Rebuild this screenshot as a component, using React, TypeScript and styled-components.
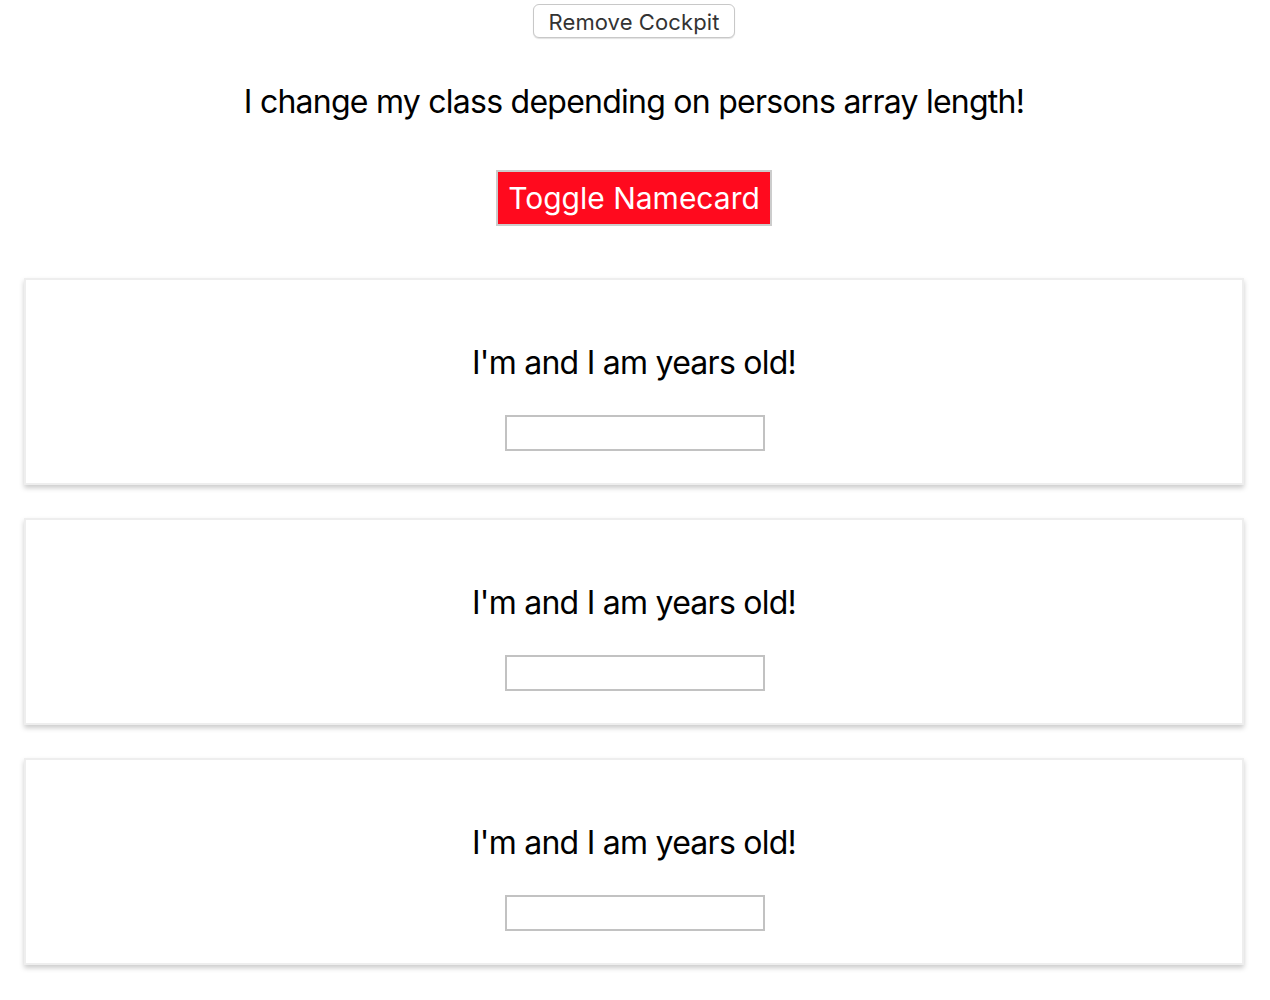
import React from "react";
import styled, { createGlobalStyle } from "styled-components";

const GlobalStyle = createGlobalStyle`
  html, body {
    margin: 0;
    padding: 0;
    background: #ffffff;
    font-family: Inter, "Noto Sans", "Liberation Sans", sans-serif;
  }
  * { box-sizing: border-box; }
`;

const Page = styled.div`
  display: flex;
  flex-direction: column;
  align-items: center;
  padding: 4px 2px 34px 0;
  text-align: center;
`;

const RemoveButton = styled.button`
  height: 34px;
  padding: 2px 15px 0;
  background: #ffffff;
  border: 1px solid #c8c8c8;
  border-radius: 6px;
  box-shadow: 0 1px 1px rgba(0, 0, 0, 0.12);
  color: #333333;
  font-family: inherit;
  font-size: 22px;
  line-height: 30px;
  letter-spacing: 0.1px;
  cursor: pointer;
`;

const Heading = styled.p`
  margin: 44px 0 0;
  font-size: 32px;
  line-height: 40px;
  letter-spacing: -0.75px;
  color: #000000;
`;

const ToggleButton = styled.button`
  margin-top: 48px;
  height: 56px;
  padding: 0 10px;
  background: #ff0a1e;
  border: 2px solid #cccccc;
  color: #ffffff;
  font-family: inherit;
  font-size: 30px;
  line-height: 50px;
  cursor: pointer;
`;

const CardList = styled.div`
  margin-top: 52px;
  display: flex;
  flex-direction: column;
  gap: 33px;
  align-items: center;
  width: 100%;
`;

const Card = styled.div`
  width: 1220px;
  padding: 63px 0 32px;
  border: 2px solid #eeeeee;
  box-shadow: 0 3px 5px #cccccc;
  background: #ffffff;
  display: flex;
  flex-direction: column;
  align-items: center;
`;

const CardText = styled.p`
  margin: 0 0 32px;
  font-size: 32px;
  line-height: 40px;
  letter-spacing: -0.75px;
  color: #000000;
`;

const NameInput = styled.input`
  width: 260px;
  height: 36px;
  margin-left: 2px;
  border: 2px solid #c2c2c2;
  background: #ffffff;
  font-family: inherit;
  font-size: 20px;
  padding: 0 6px;
  outline: none;
`;

const persons = [0, 1, 2];

export default function App() {
  return (
    <>
      <GlobalStyle />
      <Page>
        <RemoveButton>Remove Cockpit</RemoveButton>
        <Heading>I change my class depending on persons array length!</Heading>
        <ToggleButton>Toggle Namecard</ToggleButton>
        <CardList>
          {persons.map((p) => (
            <Card key={p}>
              <CardText>I'm and I am years old!</CardText>
              <NameInput type="text" />
            </Card>
          ))}
        </CardList>
      </Page>
    </>
  );
}
